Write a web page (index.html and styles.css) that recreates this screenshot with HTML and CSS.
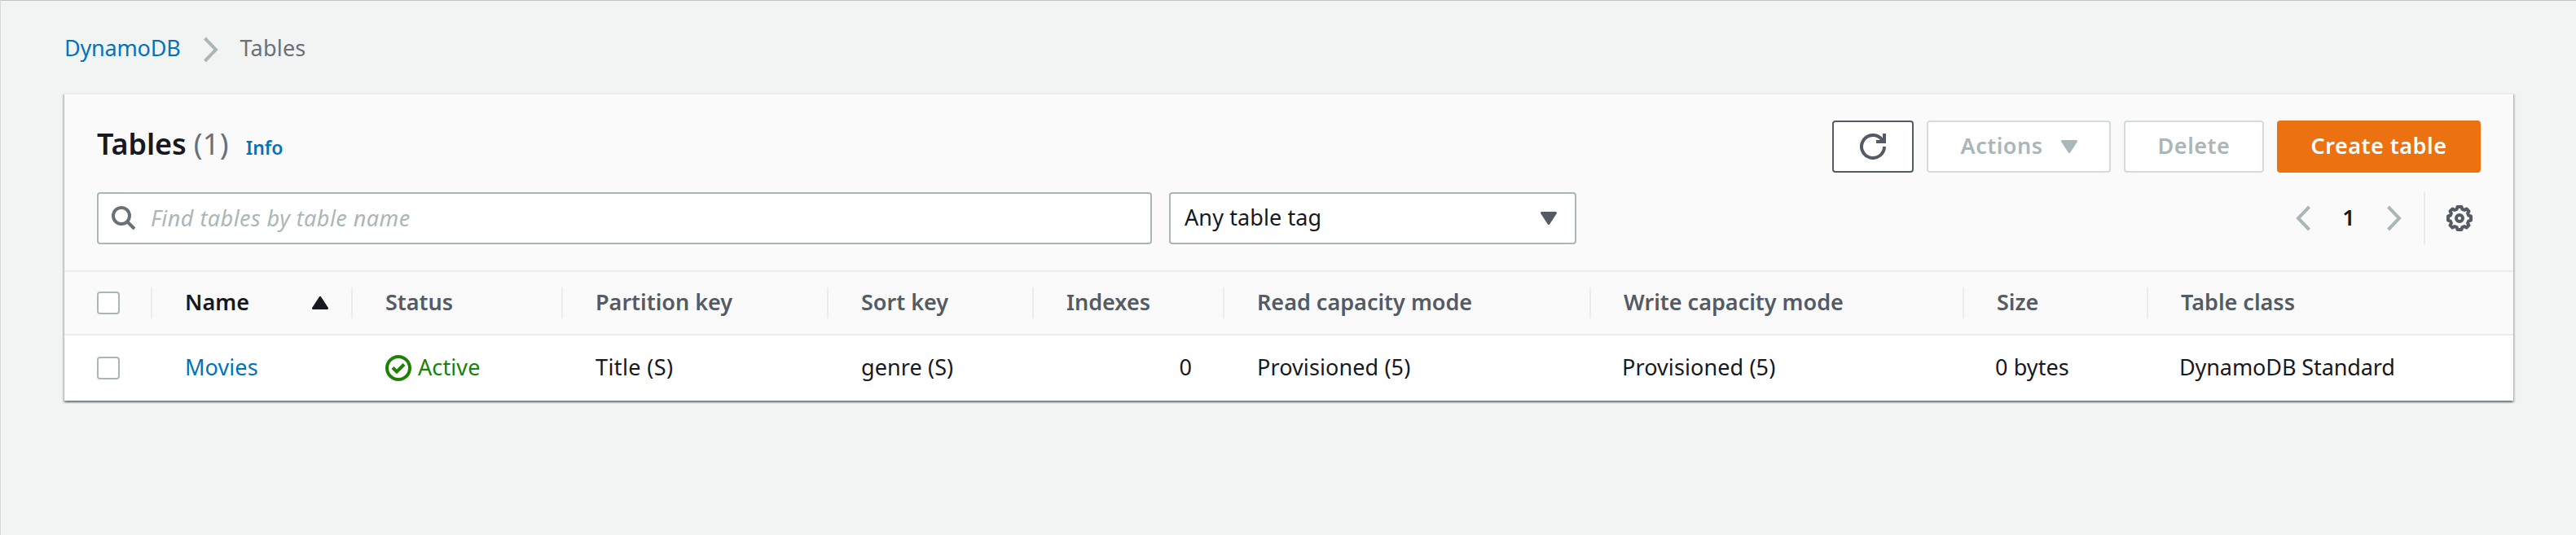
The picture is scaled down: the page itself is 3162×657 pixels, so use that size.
FILE: index.html
```
<!DOCTYPE html>
<html lang="en">
<head>
<meta charset="utf-8">
<title>DynamoDB Tables</title>
<link rel="stylesheet" href="styles.css">
</head>
<body>
<main class="page">
  <nav class="breadcrumb">
    <a class="link crumb-root" href="#">DynamoDB</a>
    <svg class="crumb-sep" width="20" height="32" viewBox="0 0 20 32"><path d="M2.500 2 16 16 2.500 30" fill="none" stroke="#aab7b8" stroke-width="4"/></svg>
    <span class="crumb-current">Tables</span>
  </nav>

  <section class="panel">
    <header class="panel-head">
      <div class="title-row">
        <h1 class="title">Tables <span class="count">(1)</span></h1>
        <a class="link info" href="#">Info</a>
        <div class="actions">
          <button class="btn btn-icon" aria-label="Refresh">
            <svg width="32" height="32" viewBox="0 0 32 32" fill="none" stroke="#545b64" stroke-width="4"><path d="M30 16A14 14 0 1 1 27 7.300L29 10"/><path d="M30 0V10H20"/></svg>
          </button>
          <button class="btn btn-actions" disabled>Actions
            <svg width="20" height="16" viewBox="0 0 20 16"><path d="M1.500 1.500H18.500L10 14.500Z" fill="#aab7b8" stroke="#aab7b8" stroke-width="3" stroke-linejoin="round"/></svg>
          </button>
          <button class="btn btn-delete" disabled>Delete</button>
          <button class="btn btn-primary">Create table</button>
        </div>
      </div>
      <div class="filter-row">
        <div class="search">
          <svg width="30" height="30" viewBox="0 0 30 30" fill="none" stroke="#687078" stroke-width="4"><circle cx="12" cy="12" r="10"/><path d="M19 19 28 28"/></svg>
          <span class="placeholder">Find tables by table name</span>
        </div>
        <div class="select">
          <span>Any table tag</span>
          <svg width="20" height="16" viewBox="0 0 20 16"><path d="M1.500 1.500H18.500L10 14.500Z" fill="#545b64" stroke="#545b64" stroke-width="3" stroke-linejoin="round"/></svg>
        </div>
        <div class="pager">
          <svg width="20" height="32" viewBox="0 0 20 32"><path d="M17.500 2 4 16 17.500 30" fill="none" stroke="#aab7b8" stroke-width="4"/></svg>
          <span class="page-number">1</span>
          <svg width="20" height="32" viewBox="0 0 20 32"><path d="M2.500 2 16 16 2.500 30" fill="none" stroke="#aab7b8" stroke-width="4"/></svg>
        </div>
        <div class="settings">
          <svg width="32" height="32" viewBox="0 0 32 32" fill="none" stroke="#545b64" stroke-width="4"><path stroke-linejoin="round" d="M13.500 2H18.500L19.300 4.800L22 5.900L24.600 4.500L27.500 7.400L26.100 10L27.200 12.700L30 13.500V18.500L27.200 19.300L26.100 22L27.500 24.600L24.600 27.500L22 26.100L19.300 27.200L18.500 30H13.500L12.700 27.200L10 26.100L7.400 27.500L4.500 24.600L5.900 22L4.800 19.300L2 18.500V13.500L4.800 12.700L5.900 10L4.500 7.400L7.400 4.500L10 5.900L12.700 4.800Z"/><circle cx="16" cy="16" r="4"/></svg>
        </div>
      </div>
    </header>

    <div class="grid grid-head">
      <div class="cell cell-check"><span class="checkbox"></span></div>
      <div class="cell cell-sorted">Name
        <svg width="20" height="16" viewBox="0 0 20 16"><path d="M1.500 14.500H18.500L10 1.500Z" fill="#16191f" stroke="#16191f" stroke-width="3" stroke-linejoin="round"/></svg>
      </div>
      <div class="cell">Status</div>
      <div class="cell">Partition key</div>
      <div class="cell">Sort key</div>
      <div class="cell">Indexes</div>
      <div class="cell">Read capacity mode</div>
      <div class="cell">Write capacity mode</div>
      <div class="cell">Size</div>
      <div class="cell">Table class</div>
    </div>
    <div class="grid grid-row">
      <div class="cell cell-check"><span class="checkbox"></span></div>
      <div class="cell"><a class="link" href="#">Movies</a></div>
      <div class="cell status">
        <svg width="32" height="32" viewBox="0 0 32 32" fill="none" stroke="#1d8102" stroke-width="4"><circle cx="16" cy="16" r="14"/><path d="M9 15.500 14 20.500 23 11.500"/></svg>
        <span>Active</span>
      </div>
      <div class="cell cell-key">Title (S)</div>
      <div class="cell">genre (S)</div>
      <div class="cell cell-number">0</div>
      <div class="cell">Provisioned (5)</div>
      <div class="cell cell-tight">Provisioned (5)</div>
      <div class="cell cell-tight">0 bytes</div>
      <div class="cell cell-tight cell-class">DynamoDB Standard</div>
    </div>
  </section>
</main>
</body>
</html>
```
FILE: styles.css
```
* { box-sizing: border-box; }

body {
  margin: 0;
  background: #f2f3f3;
  color: #16191f;
  font: 27px/36px "Noto Sans", "Open Sans", sans-serif;
}

svg { display: block; flex: none; }

.page {
  min-height: 657px;
  padding: 40px 77px 0 78px;
  border-top: 1px solid #bfc6c9;
  border-left: 1px solid #d5dbdb;
}

.link { color: #0073bb; text-decoration: none; }

.breadcrumb {
  display: flex;
  align-items: center;
  height: 36px;
  margin-bottom: 37px;
}
.crumb-root { letter-spacing: -0.2px; }
.crumb-sep { margin: 3px 26px 0 27px; }
.crumb-current { color: #687078; letter-spacing: 0.2px; }

.panel {
  border-top: 2px solid #eaeded;
  background: #fff;
  box-shadow:
    0 2px 2px 0 rgba(0, 28, 36, 0.4),
    2px 2px 2px 0 rgba(0, 28, 36, 0.15),
    -2px 2px 2px 0 rgba(0, 28, 36, 0.15);
}

.panel-head {
  height: 218px;
  padding: 32px 40px 0;
  background: #fafafa;
  border-bottom: 2px solid #eaeded;
}

.title-row { display: flex; align-items: baseline; height: 64px; }
.title {
  margin: 0;
  font-size: 36px;
  line-height: 57px;
  font-weight: 600;
  letter-spacing: -0.1px;
}
.count { color: #687078; font-weight: 400; letter-spacing: 0.2px; }
.info { margin-left: 21px; font-size: 23px; font-weight: 600; }

.actions { display: flex; gap: 16px; margin-left: auto; align-self: flex-start; }
.btn {
  display: flex;
  align-items: center;
  justify-content: center;
  height: 64px;
  padding: 0 0 3px;
  border: 2px solid #545b64;
  border-radius: 4px;
  background: #fff;
  color: #545b64;
  font: 600 27px/36px "Noto Sans", "Open Sans", sans-serif;
  letter-spacing: 0.5px;
}
.btn:disabled { border-color: #d5dbdb; color: #aab7b8; }
.btn-icon { width: 100px; padding-bottom: 0; }
.btn-actions { width: 226px; gap: 22px; }
.btn-actions svg { margin-top: 3px; }
.btn-delete { width: 172px; }
.btn-primary { width: 250px; border-color: #ec7211; background: #ec7211; color: #fff; }

.filter-row { display: flex; height: 64px; margin-top: 24px; }
.search, .select {
  display: flex;
  align-items: center;
  border: 2px solid #aab7b8;
  border-radius: 4px;
  background: #fff;
}
.search { width: 1295px; padding: 0 16px; gap: 18px; }
.placeholder {
  padding-bottom: 1px;
  color: #aab7b8;
  font-style: italic;
  letter-spacing: 0.45px;
}
.select {
  width: 500px;
  margin-left: 21px;
  padding: 0 22px 0 17px;
  justify-content: space-between;
  letter-spacing: 0.1px;
}
.select span { padding-bottom: 2px; }

.pager { display: flex; align-items: center; margin-left: auto; }
.page-number {
  width: 92px;
  padding-bottom: 3px;
  text-align: center;
  font-weight: 600;
}
.settings {
  display: flex;
  align-items: center;
  margin-left: 26px;
  padding: 0 10px 0 26px;
  border-left: 2px solid #eaeded;
}

.grid {
  display: grid;
  grid-template-columns: 108px 246px 258px 326px 252px 234px 450px 458px 226px 448px;
  align-items: center;
}
.grid-head {
  height: 78px;
  background: #fafafa;
  border-bottom: 2px solid #eaeded;
  color: #545b64;
  font-weight: 600;
}
.grid-row { height: 80px; letter-spacing: 0.1px; }
.cell {
  display: flex;
  align-items: center;
  height: 38px;
  padding: 0 28px 3px 40px;
}
.grid-head .cell:not(:last-child) { border-right: 2px solid #eaeded; }
.cell-check { padding: 0 0 0 40px; }
.cell-sorted { justify-content: space-between; color: #16191f; }
.cell-sorted svg { margin-top: 3px; }
.cell-key { letter-spacing: 0.4px; }
.cell-number { justify-content: flex-end; padding-right: 40px; }
.cell-tight { padding-left: 38px; }
.cell-class { letter-spacing: -0.1px; }
.status { gap: 8px; color: #1d8102; }
.status svg { margin-top: 3px; }

.checkbox {
  width: 28px;
  height: 28px;
  border: 2px solid #aab7b8;
  border-radius: 4px;
  background: #fff;
}
```
